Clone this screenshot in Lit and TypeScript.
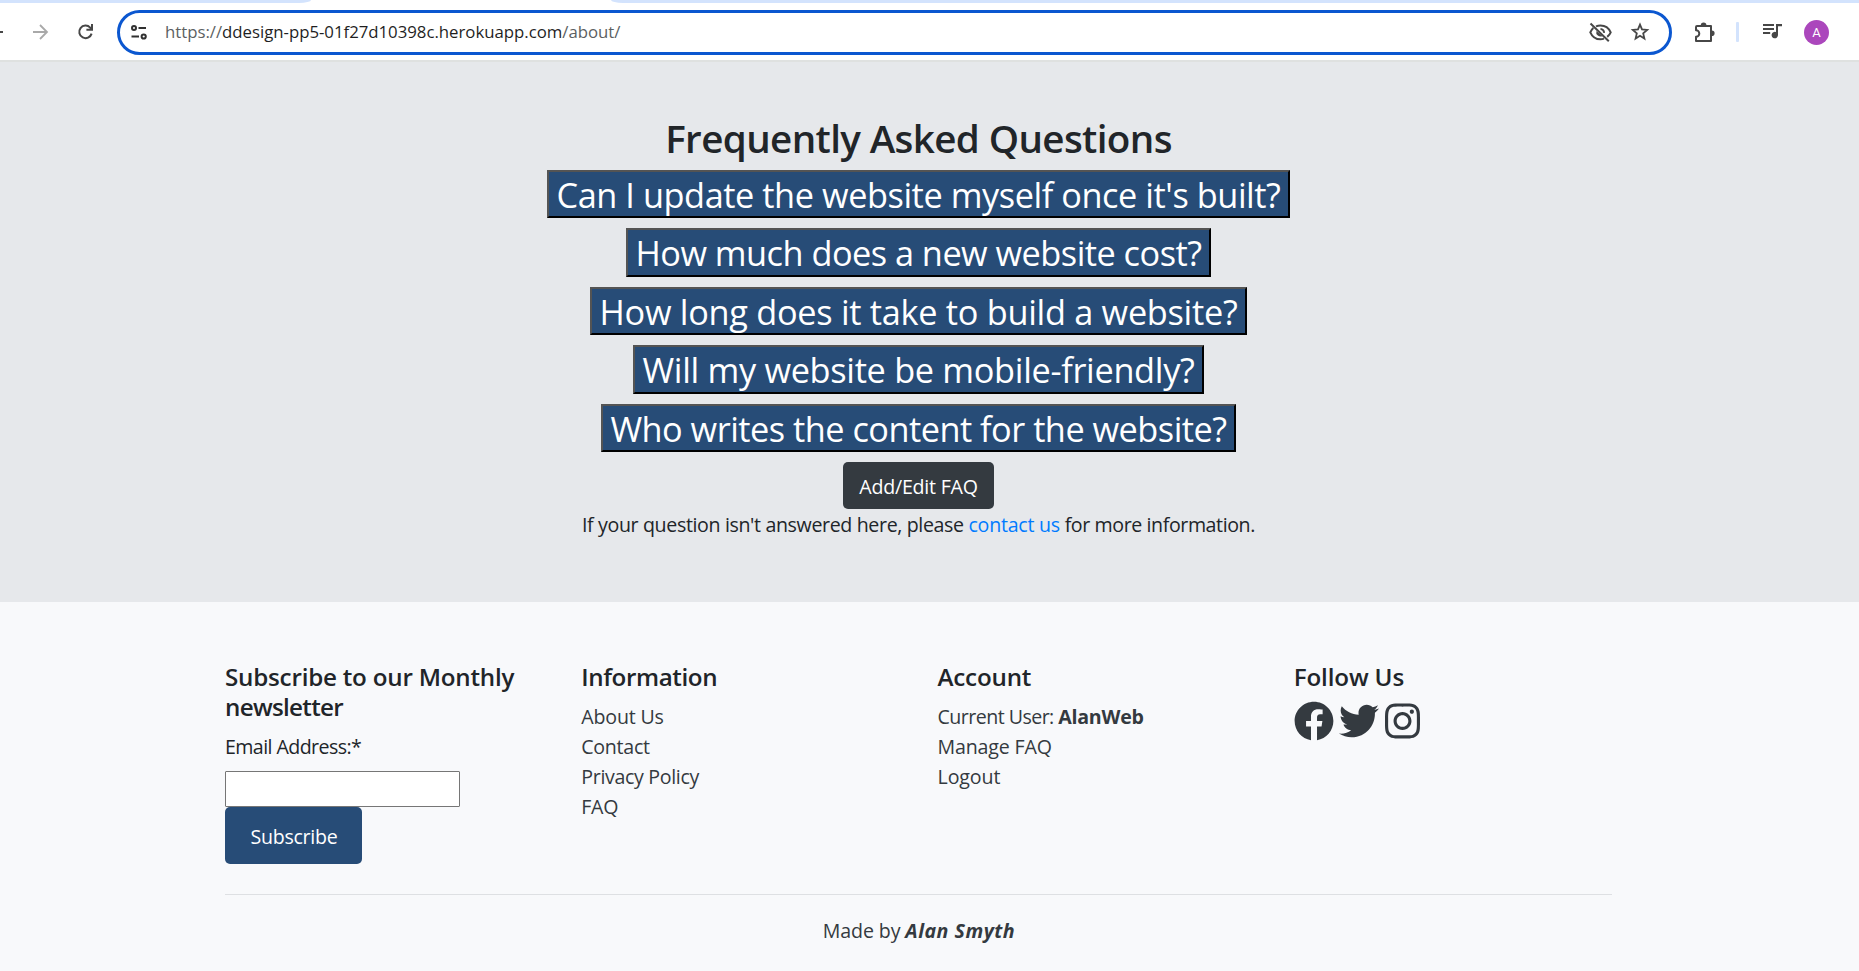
import { LitElement, html, css, svg } from "lit";
import { customElement } from "lit/decorators.js";

type Tracked = { text: string; track: number };

const questions: Tracked[] = [
  { text: "Can I update the website myself once it's built?", track: -0.44 },
  { text: "How much does a new website cost?", track: -0.52 },
  { text: "How long does it take to build a website?", track: -0.29 },
  { text: "Will my website be mobile-friendly?", track: -0.31 },
  { text: "Who writes the content for the website?", track: -0.51 },
];

const infoLinks: Tracked[] = [
  { text: "About Us", track: -0.17 },
  { text: "Contact", track: -0.26 },
  { text: "Privacy Policy", track: -0.33 },
  { text: "FAQ", track: -0.3 },
];

const accountLinks: Tracked[] = [
  { text: "Manage FAQ", track: -0.15 },
  { text: "Logout", track: -0.1 },
];

const t = (text: string, track: number) =>
  html`<span style="letter-spacing:${track}px">${text}</span>`;

const socials = [
  { w: 512, path: "M504 256C504 119 393 8 256 8S8 119 8 256c0 123.78 90.69 226.38 209.25 245V327.69h-63V256h63v-54.64c0-62.15 37-96.48 93.67-96.48 27.14 0 55.52 4.84 55.52 4.84v61h-31.28c-30.8 0-40.41 19.12-40.41 38.73V256h68.78l-11 71.69h-57.78V501C413.31 482.38 504 379.78 504 256z" },
  { w: 512, path: "M459.37 151.716c.325 4.548.325 9.097.325 13.645 0 138.72-105.583 298.558-298.558 298.558-59.452 0-114.68-17.219-161.137-47.106 8.447.974 16.568 1.299 25.34 1.299 49.055 0 94.213-16.568 130.274-44.832-46.132-.975-84.792-31.188-98.112-72.772 6.498.974 12.995 1.624 19.818 1.624 9.421 0 18.843-1.3 27.614-3.573-48.081-9.747-84.143-51.98-84.143-102.985v-1.299c13.969 7.797 30.214 12.67 47.431 13.319-28.264-18.843-46.781-51.005-46.781-87.391 0-19.492 5.197-37.36 14.294-52.954 51.655 63.675 129.3 105.258 216.365 109.807-1.624-7.797-2.599-15.918-2.599-24.04 0-57.828 46.782-104.934 104.934-104.934 30.213 0 57.502 12.67 76.67 33.137 23.715-4.548 46.456-13.32 66.599-25.34-7.798 24.366-24.366 44.833-46.132 57.827 21.117-2.273 41.584-8.122 60.426-16.243-14.292 20.791-32.161 39.308-52.628 54.253z" },
  { w: 448, path: "M224.1 141c-63.6 0-114.9 51.3-114.9 114.9s51.3 114.9 114.9 114.9S339 319.5 339 255.9 287.7 141 224.1 141zm0 189.6c-41.1 0-74.7-33.5-74.7-74.7s33.5-74.7 74.7-74.7 74.7 33.5 74.7 74.7-33.6 74.7-74.7 74.7zm146.4-194.3c0 14.9-12 26.8-26.8 26.8-14.9 0-26.8-12-26.8-26.8s12-26.8 26.8-26.8 26.8 12 26.8 26.8zm76.1 27.2c-1.7-35.9-9.9-67.7-36.2-93.9-26.2-26.2-58-34.4-93.9-36.2-37-2.1-147.9-2.1-184.9 0-35.8 1.7-67.6 9.9-93.9 36.1s-34.4 58-36.2 93.9c-2.1 37-2.1 147.9 0 184.9 1.7 35.9 9.9 67.7 36.2 93.9s58 34.4 93.9 36.2c37 2.1 147.9 2.1 184.9 0 35.9-1.7 67.7-9.9 93.9-36.2 26.2-26.2 34.4-58 36.2-93.9 2.1-37 2.1-147.8 0-184.8zM398.8 388c-7.8 19.6-22.9 34.7-42.6 42.6-29.5 11.7-99.5 9-132.1 9s-102.7 2.6-132.1-9c-19.6-7.8-34.7-22.9-42.6-42.6-11.7-29.5-9-99.5-9-132.1s-2.6-102.7 9-132.1c7.8-19.6 22.9-34.7 42.6-42.6 29.5-11.7 99.5-9 132.1-9s102.7-2.6 132.1 9c19.6 7.8 34.7 22.9 42.6 42.6 11.7 29.5 9 99.5 9 132.1s2.7 102.7-9 132.1z" },
];

@customElement("browser-bar")
export class BrowserBar extends LitElement {
  static styles = css`
    :host { display: block; height: 62px; box-sizing: border-box; background: #fff; border-bottom: 2px solid #dfe1e0; overflow: hidden; }
    .tabs { display: flex; justify-content: space-between; height: 3px; }
    .left { width: 311px; background: #d3e3fd; border-bottom-right-radius: 12px 3px; }
    .right { width: 1248px; background: #d3e3fd; border-bottom-left-radius: 12px 3px; }
    .bar { display: flex; align-items: center; height: 57px; padding-top: 1px; box-sizing: border-box; }
    svg { display: block; flex: none; overflow: visible; }
    .back { flex: none; width: 3px; height: 2px; background: #474747; }
    .fwd { margin-left: 30px; }
    .reload { margin-left: 30px; }
    .omni { display: flex; align-items: center; box-sizing: border-box; flex: none; width: 1555px; height: 45px; margin-left: 24px; border: 3px solid #0b57d0; border-radius: 23px; padding: 0 20px 0 11px; }
    .url { flex: 1; margin-left: 18px; font: 16.8px/24px "Open Sans", sans-serif; letter-spacing: -0.02px; color: #5c5f62; white-space: nowrap; }
    .host { color: #1f1f1f; }
    .eye { margin-right: 19px; }
    .puzzle { margin-left: 22px; }
    .rule { width: 3px; height: 20px; border-radius: 1px; background: #d3e3fd; margin-left: 20px; flex: none; }
    .queue { margin-left: 24px; margin-bottom: 1px; }
    .avatar { flex: none; margin-left: 22px; width: 25px; height: 25px; border-radius: 50%; background: #ab47bc; color: #fff; font: 400 13px/25px Roboto, sans-serif; text-align: center; }
    .dots { margin-left: 30px; }
  `;
  render() {
    return html`
      <div class="tabs"><div class="left"></div><div class="right"></div></div>
      <div class="bar">
        <div class="back"></div>
        <svg class="fwd" width="15" height="16" viewBox="0 0 15 16" fill="none" stroke="#a9a9a9" stroke-width="1.8"><path d="M0 8h13.5M7 1l7 7-7 7" /></svg>
        <svg class="reload" width="15" height="16" viewBox="0 0 15 16" fill="none" stroke="#474747" stroke-width="2"><path d="M13.6 9.6A6.3 6.3 0 1 1 12.2 3.6L14 5.6M14 0v5.8H8.4" /></svg>
        <div class="omni">
          <svg width="16" height="15" viewBox="0 0 16 15" fill="none" stroke="#303030" stroke-width="2"><circle cx="3" cy="3" r="2" /><path d="M7.5 3H15M.5 11.5H8" /><circle cx="12.7" cy="11.5" r="2.1" /></svg>
          <div class="url">https://<span class="host">ddesign-pp5-01f27d10398c.herokuapp.com</span>/about/</div>
          <svg class="eye" width="23" height="19" viewBox="0 0 23 19" fill="none" stroke="#474747" stroke-width="2"><path d="M7 3.3Q9 2.4 11.5 2.4C16 2.4 19.8 5 21.7 9.3Q20.6 12 18.2 13.9M15 15.6Q13.3 16.3 11.5 16.3C7 16.3 3.2 13.7 1.3 9.3Q2.2 7 4.3 5M1.5.5 19.8 18.3" /><path d="M7.4 8A4.3 4.3 0 0 0 13.6 13Z" fill="#474747" stroke="none" /><path d="M11.5 5.9A3.6 3.6 0 0 1 15 9.8" /></svg>
          <svg width="18" height="18" viewBox="0 0 18 18" fill="none" stroke="#474747" stroke-width="1.8"><path d="M9 1.6 11 6.4 16.2 6.9 12.2 10.4 13.4 15.6 9 12.8 4.6 15.6 5.8 10.4 1.8 6.9 7 6.4Z" /></svg>
        </div>
        <svg class="puzzle" width="22" height="21" viewBox="0 0 22 21"><path d="M3 4H17V19H2V14.8A3.3 3.3 0 0 0 2 8.2V5A1 1 0 0 1 3 4Z" fill="none" stroke="#474747" stroke-width="2" stroke-linejoin="round" /><path d="M6.8 3.3a2.8 2.8 0 0 1 5.6 0ZM17.8 8.5a2.8 2.8 0 0 1 0 5.6Z" fill="#474747" /></svg>
        <div class="rule"></div>
        <svg class="queue" width="19" height="15" viewBox="0 0 19 15" fill="#474747"><path d="M0 0h11v2H0zM0 4h11v2H0zM0 8h7.2v2H0zM13 0h6v2.2h-4V11a3.2 3.2 0 1 1-2-2.9z" /></svg>
        <div class="avatar">A</div>
        <svg class="dots" width="3" height="16" viewBox="0 0 3 16" fill="#8a8a8a"><circle cx="1.9" cy="2" r="1.6" /><circle cx="1.9" cy="8" r="1.6" /><circle cx="1.9" cy="14" r="1.6" /></svg>
      </div>`;
  }
}

@customElement("app-root")
export class AppRoot extends LitElement {
  static styles = css`
    :host { display: block; height: 971px; overflow: hidden; background: #f8f9fb; color: #212529; font: 19.6px/30px "Open Sans", "Noto Sans", sans-serif; white-space: nowrap; }
    .faq { box-sizing: border-box; height: 540px; padding: 52px 22px 0 0; background: #e6e8eb; display: flex; flex-direction: column; align-items: center; }
    h2 { margin: 0 0 7.9px; font-size: 38.6px; line-height: 48px; font-weight: 600; letter-spacing: -0.62px; }
    .q { box-sizing: border-box; height: 48.4px; margin: 0 0 10.1px; padding: 1px 7.5px 0; border: 2px outset #000; background: #274c77; color: #fff; font: 34.3px/44px "Open Sans", sans-serif; }
    .btn { display: block; border: 0; border-radius: 5px; color: #fff; font: 19.6px/47px "Open Sans", sans-serif; padding: 0; text-align: center; }
    .edit { width: 151px; height: 47px; line-height: 47px; padding-top: 1px; background: #343a40; }
    .ask { white-space: pre; margin-top: 0.7px; }
    .ask a { color: #007bff; }
    footer { padding: 59.5px 22px 0 0; }
    .wrap { width: 1387px; margin: 0 auto; }
    .cols { display: grid; grid-template-columns: repeat(3, 356.25px) 1fr; height: 232px; border-bottom: 1px solid #dee0e3; }
    h5 { margin: 0 0 10px; font-size: 24.2px; line-height: 30px; font-weight: 600; }
    .line { display: block; color: #343a40; }
    .label { color: #212529; margin-bottom: 9.5px; }
    input { display: block; box-sizing: border-box; width: 235px; height: 36px; margin: 0; border: 1px solid #767676; border-radius: 1px; background: #fff; }
    .sub { width: 137px; height: 57px; line-height: 55px; padding: 2px 0 0 1px; background: #274c77; }
    .social { display: flex; gap: 5.4px; }
    .follow { margin-bottom: 9.4px; }
    .social svg { height: 40px; fill: #343a40; display: block; }
    .made { text-align: center; margin-top: 21.5px; padding-left: 1px; color: #343a40; white-space: pre; }
  `;
  render() {
    return html`
      <browser-bar></browser-bar>
      <section class="faq">
        <h2>Frequently Asked Questions</h2>
        ${questions.map((q) => html`<button class="q">${t(q.text, q.track)}</button>`)}
        <button class="btn edit">${t("Add/Edit FAQ", -0.23)}</button>
        <div class="ask">${t("If your question isn't answered here, please ", -0.36)}<a>${t("contact us", -0.24)}</a>${t(" for more information.", -0.4)}</div>
      </section>
      <footer>
        <div class="wrap">
          <div class="cols">
            <div>
              <h5>${t("Subscribe to our Monthly", -0.22)}<br />${t("newsletter", -0.7)}</h5>
              <div class="label">${t("Email Address:*", -0.58)}</div>
              <input type="email" />
              <button class="btn sub">${t("Subscribe", -0.28)}</button>
            </div>
            <div>
              <h5>${t("Information", -0.4)}</h5>
              ${infoLinks.map((l) => html`<a class="line">${t(l.text, l.track)}</a>`)}
            </div>
            <div>
              <h5>${t("Account", -0.2)}</h5>
              <div class="line">${t("Current User: ", -0.54)}<b>${t("AlanWeb", -0.25)}</b></div>
              ${accountLinks.map((l) => html`<a class="line">${t(l.text, l.track)}</a>`)}
            </div>
            <div>
              <h5 class="follow">${t("Follow Us", -0.15)}</h5>
              <div class="social">
                ${socials.map((s) => html`<svg width=${(s.w / 512) * 40} viewBox="0 0 ${s.w} 512">${svg`<path d=${s.path} />`}</svg>`)}
              </div>
            </div>
          </div>
          <div class="made">${t("Made by ", -0.12)}<b><i>${t("Alan Smyth", 0.5)}</i></b></div>
        </div>
      </footer>`;
  }
}
